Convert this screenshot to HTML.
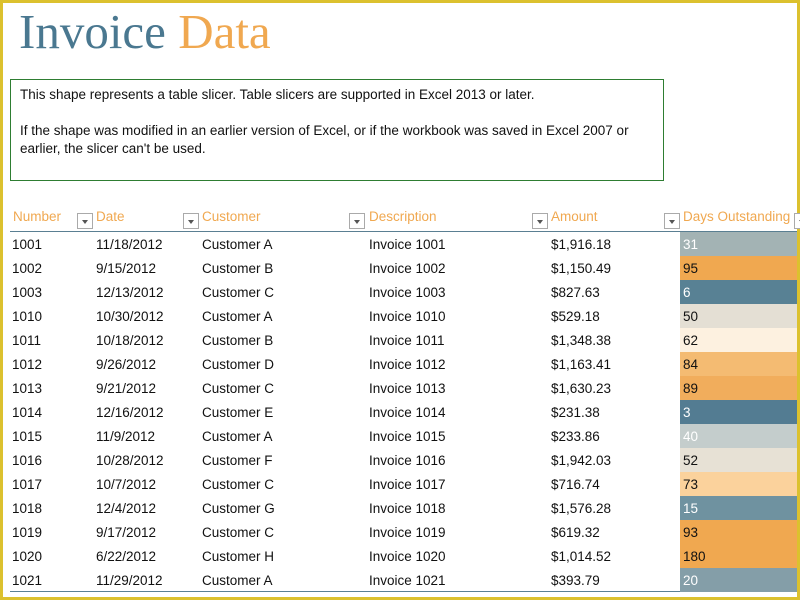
<!DOCTYPE html>
<html><head><style>
body{margin:0;width:800px;height:600px;overflow:hidden;background:#fff;font-family:"Liberation Sans",sans-serif;position:relative}
.frame{position:absolute;left:0;top:0;width:794px;height:594px;border:3px solid #dcc12e}
h1{position:absolute;left:19px;top:6px;margin:0;font-family:"Liberation Serif",serif;font-weight:normal;font-size:49px;line-height:52px;color:#4a7890}
h1 span{color:#f0a850}
.box{position:absolute;left:10px;top:79px;width:652px;height:100px;border:1px solid #2e7d32;font-size:13.5px;color:#111;line-height:18px}
.box p{margin:6px 9px 0;white-space:nowrap}
.hdr{position:absolute;top:209px;font-size:13.5px;color:#f0a850}
.fb{position:absolute;top:213px;width:16px;height:16px;border:1px solid #aaa;background:#fff;box-sizing:border-box}
.fb:after{content:"";position:absolute;left:4px;top:6px;border-left:3px solid transparent;border-right:3px solid transparent;border-top:4px solid #555}
.line{position:absolute;left:10px;width:787px;height:1px;background:#5a7f92}
.row{position:absolute;left:0;width:797px;height:24px;font-size:13.5px;color:#111;line-height:26px}
.row span{position:absolute}
.d{left:680px;width:117px;height:24px;padding-left:3px;box-sizing:border-box}
</style></head><body>
<div class="frame"></div>
<h1>Invoice <span>Data</span></h1>
<div class="box"><p>This shape represents a table slicer. Table slicers are supported in Excel 2013 or later.</p><p style="margin-top:18px">If the shape was modified in an earlier version of Excel, or if the workbook was saved in Excel 2007 or<br>earlier, the slicer can't be used.</p></div>
<div class="hdr" style="left:13px">Number</div><div class="fb" style="left:77px"></div>
<div class="hdr" style="left:96px">Date</div><div class="fb" style="left:183px"></div>
<div class="hdr" style="left:202px">Customer</div><div class="fb" style="left:349px"></div>
<div class="hdr" style="left:369px">Description</div><div class="fb" style="left:532px"></div>
<div class="hdr" style="left:551px">Amount</div><div class="fb" style="left:664px"></div>
<div class="hdr" style="left:683px">Days Outstanding</div><div class="fb" style="left:794px"></div>
<div class="line" style="top:231px"></div>
<div class="line" style="top:591px"></div>
<div id="rows"></div>
<script>
var data=[["1001","11/18/2012","Customer A","$1,916.18","31","#a3b3b4",1],["1002","9/15/2012","Customer B","$1,150.49","95","#f0a850",0],["1003","12/13/2012","Customer C","$827.63","6","#588194",1],["1010","10/30/2012","Customer A","$529.18","50","#e4dfd4",0],["1011","10/18/2012","Customer B","$1,348.38","62","#fdf1e0",0],["1012","9/26/2012","Customer D","$1,163.41","84","#f4bb72",0],["1013","9/21/2012","Customer C","$1,630.23","89","#f1ad5c",0],["1014","12/16/2012","Customer E","$231.38","3","#537c92",1],["1015","11/9/2012","Customer A","$233.86","40","#c4cdcc",1],["1016","10/28/2012","Customer F","$1,942.03","52","#e7e1d5",0],["1017","10/7/2012","Customer C","$716.74","73","#fbd29c",0],["1018","12/4/2012","Customer G","$1,576.28","15","#6f92a0",1],["1019","9/17/2012","Customer C","$619.32","93","#f0a850",0],["1020","6/22/2012","Customer H","$1,014.52","180","#f0a850",0],["1021","11/29/2012","Customer A","$393.79","20","#849ea8",1]];
var h="";data.forEach(function(r,i){h+='<div class="row" style="top:'+(232+i*24)+'px"><span style="left:12px">'+r[0]+'</span><span style="left:96px">'+r[1]+'</span><span style="left:202px">'+r[2]+'</span><span style="left:369px">Invoice '+r[0]+'</span><span style="left:551px">'+r[3]+'</span><span class="d" style="background:'+r[5]+';color:'+(r[6]?'#fff':'#111')+'">'+r[4]+'</span></div>';});
document.getElementById("rows").innerHTML=h;
</script>
</body></html>
